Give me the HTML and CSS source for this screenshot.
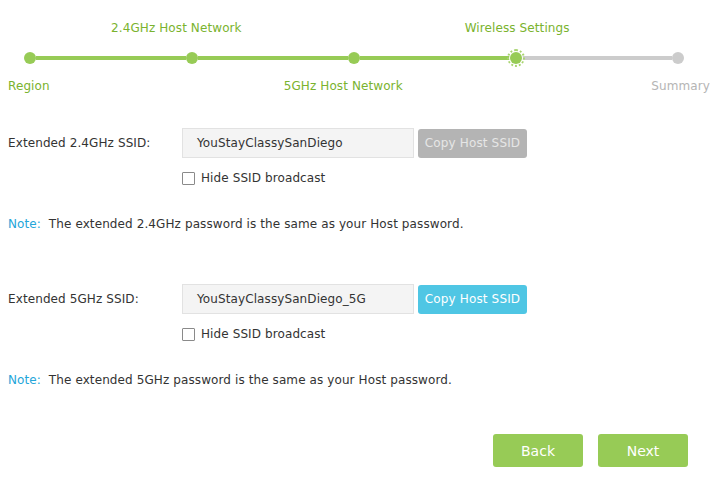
FILE: index.html
```html
<!DOCTYPE html>
<html>
<head>
<meta charset="utf-8">
<link rel="stylesheet" href="styles.css">
</head>
<body>
<div class="page">
  <div class="steps">
    <div class="labels top">
      <span class="lbl l-24">2.4GHz Host Network</span>
      <span class="lbl l-ws">Wireless Settings</span>
    </div>
    <div class="track">
      <span class="dot done"></span>
      <span class="seg done"></span>
      <span class="dot done"></span>
      <span class="seg done"></span>
      <span class="dot done"></span>
      <span class="seg done"></span>
      <span class="dot current"></span>
      <span class="seg"></span>
      <span class="dot"></span>
    </div>
    <div class="labels bottom">
      <span class="lbl l-region">Region</span>
      <span class="lbl l-5g">5GHz Host Network</span>
      <span class="lbl l-sum">Summary</span>
    </div>
  </div>

  <div class="section first">
    <div class="row">
      <span class="field-label">Extended 2.4GHz SSID:</span>
      <div class="input">YouStayClassySanDiego</div>
      <button class="copy disabled">Copy Host SSID</button>
    </div>
    <label class="check"><span class="box"></span>Hide SSID broadcast</label>
    <p class="note"><span class="note-key">Note:</span> The extended 2.4GHz password is the same as your Host password.</p>
  </div>

  <div class="section second">
    <div class="row">
      <span class="field-label">Extended 5GHz SSID:</span>
      <div class="input">YouStayClassySanDiego_5G</div>
      <button class="copy active">Copy Host SSID</button>
    </div>
    <label class="check"><span class="box"></span>Hide SSID broadcast</label>
    <p class="note"><span class="note-key">Note:</span> The extended 5GHz password is the same as your Host password.</p>
  </div>

  <div class="actions">
    <button class="btn">Back</button>
    <button class="btn">Next</button>
  </div>
</div>
</body>
</html>
```

FILE: styles.css
```css
* { box-sizing: border-box; }
html, body { margin: 0; padding: 0; background: #fff; }
body {
  font-family: "DejaVu Sans", Verdana, sans-serif;
  font-size: 12px;
  letter-spacing: 0.1px;
  color: #333;
}
.page { width: 725px; height: 479px; padding: 0 8px; }

.steps { padding-top: 20px; }
.labels { display: flex; height: 16px; line-height: 16px; }
.lbl { color: #7ab32e; white-space: nowrap; }
.labels.top { margin-bottom: 12px; }
.l-24 { margin-left: 103px; }
.l-ws { margin-left: 223px; }
.labels.bottom { margin-top: 10px; }
.l-region { margin-left: 0; }
.l-5g { margin-left: 234px; }
.l-sum { margin-left: auto; color: #b5b5b5; margin-right: 7px; }

.track { display: flex; align-items: center; height: 20px; padding-left: 16px; width: 676px; }
.dot { width: 12px; height: 12px; border-radius: 50%; background: #cccccc; flex: none; position: relative; }
.dot.done { background: #97cb56; }
.dot.current {
  background: #97cb56;
  box-shadow: 0 0 0 1px #fff;
  outline: 2px dotted #a8d470;
  outline-offset: 1px;
}
.seg { flex: 1; height: 4px; background: #cccccc; }
.seg.done { background: #97cb56; }

.section.first { margin-top: 34px; }
.section.second { margin-top: 52px; }
.row { display: flex; align-items: center; height: 30px; }
.field-label { width: 174px; flex: none; }
.input {
  width: 232px; height: 30px; line-height: 28px;
  background: #f4f4f4; border: 1px solid #e2e2e2;
  padding-left: 14px; color: #333;
}
.copy {
  margin-left: 4px; width: 109px; height: 29px;
  border: none; border-radius: 3px;
  font-family: inherit; font-size: 12px; letter-spacing: 0.15px; padding: 0;
}
.copy.disabled { background: #b4b4b4; color: #e6e6e6; }
.copy.active { background: #4fc6e4; color: #fff; }

.check { display: flex; align-items: center; margin-left: 174px; margin-top: 12px; height: 16px; color: #333; }
.box { width: 13px; height: 13px; border: 1px solid #8a8a8a; border-radius: 1px; background: #fff; margin-right: 6px; }

.note { margin: 30px 0 0; line-height: 16px; color: #333; }
.note-key { color: #24a6d9; margin-right: 4px; }

.actions { display: flex; justify-content: flex-end; gap: 15px; margin-top: 46px; padding-right: 29px; }
.btn {
  width: 90px; height: 33px; border: none; border-radius: 3px;
  background: #97cb56; color: #fff;
  font-family: "DejaVu Sans", Verdana, sans-serif; font-size: 14px; padding: 0;
}
```
